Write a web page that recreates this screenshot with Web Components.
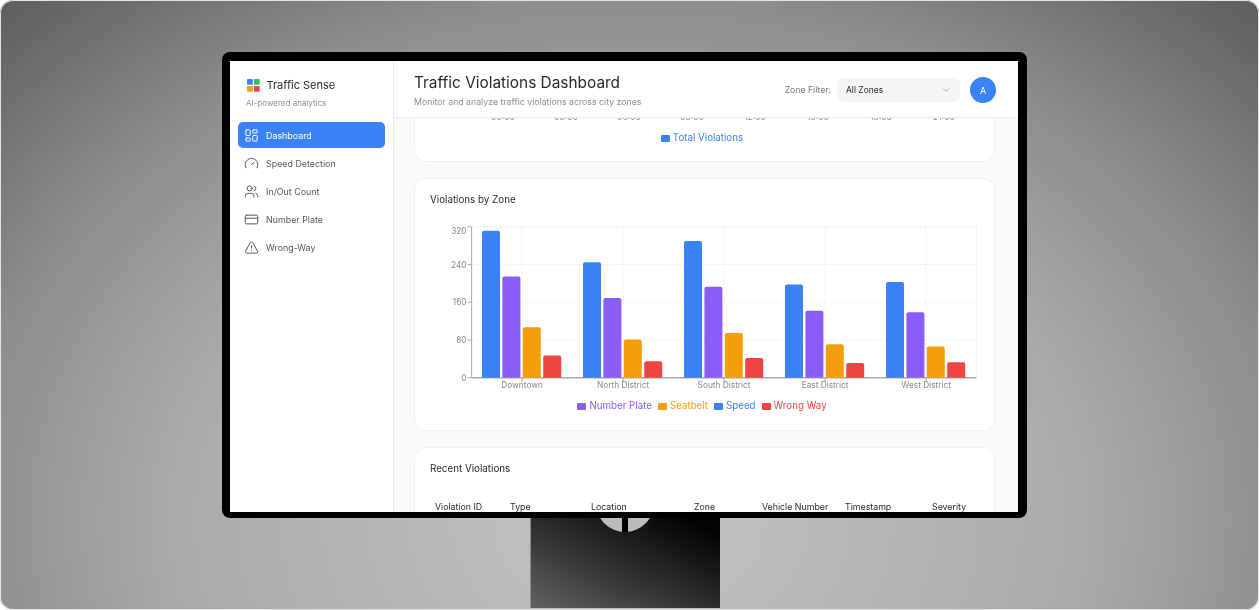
<!DOCTYPE html>
<html lang="en">
<head>
<meta charset="utf-8">
<title>Traffic Sense</title>
<style>
  html, body { margin: 0; background: #fff; font-family: Inter, "Liberation Sans", sans-serif; }
</style>
</head>
<body>
<dash-scene>
  <side-bar slot="side">
    <nav-item icon="dashboard" active>Dashboard</nav-item>
    <nav-item icon="gauge">Speed Detection</nav-item>
    <nav-item icon="users">In/Out Count</nav-item>
    <nav-item icon="card">Number Plate</nav-item>
    <nav-item icon="alert">Wrong-Way</nav-item>
  </side-bar>
  <top-bar slot="top"></top-bar>
  <trend-stub></trend-stub>
  <zone-chart></zone-chart>
  <recent-table></recent-table>
</dash-scene>

<script>
const ICONS = {
  dashboard: '<rect x="3" y="3" width="7" height="9" rx="1"/><rect x="14" y="3" width="7" height="5" rx="1"/><rect x="14" y="12" width="7" height="9" rx="1"/><rect x="3" y="16" width="7" height="5" rx="1"/>',
  gauge: '<path d="m12 14 4-4"/><path d="M3.34 19a10 10 0 1 1 17.32 0"/>',
  users: '<path d="M16 21v-2a4 4 0 0 0-4-4H6a4 4 0 0 0-4 4v2"/><circle cx="9" cy="7" r="4"/><path d="M22 21v-2a4 4 0 0 0-3-3.87"/><path d="M16 3.13a4 4 0 0 1 0 7.75"/>',
  card: '<rect x="2" y="5" width="20" height="14" rx="2"/><path d="M2 10h20"/>',
  alert: '<path d="m21.73 18-8-14a2 2 0 0 0-3.48 0l-8 14A2 2 0 0 0 4 21h16a2 2 0 0 0 1.73-3"/><path d="M12 9v4"/><path d="M12 17h.01"/>',
};

class DashScene extends HTMLElement {
  constructor() {
    super();
    this.attachShadow({ mode: "open" });
    this.shadowRoot.innerHTML = `
      <style>
        :host {
          display: block;
          width: 1259px;
          height: 610px;
          box-sizing: border-box;
          padding: 52px 0 0 222px;
          overflow: hidden;
          border-radius: 13px;
          background: radial-gradient(ellipse 900px 700px at 50% 85%, #c4c4c4 0%, #ababab 50%, #8c8c8c 75%, #606060 100%);
          box-shadow: inset 0 0 0 1px #e4e4e4;
        }
        .monitor {
          width: 805px;
          height: 466px;
          box-sizing: border-box;
          padding: 9px 9px 6px 8px;
          background: #000;
          border-radius: 8px;
        }
        .screen {
          display: flex;
          height: 100%;
          background: #fafafa;
          overflow: hidden;
          filter: blur(0.3px);
        }
        .right { flex: 1; min-width: 0; display: flex; flex-direction: column; }
        .main {
          flex: 1;
          min-height: 0;
          overflow: hidden;
          display: flex;
          flex-direction: column;
          gap: 16px;
          padding: 0 23px 0 20px;
        }
        .stand {
          position: relative;
          width: 190px;
          height: 90px;
          margin-left: 308px;
          overflow: hidden;
          background: linear-gradient(205deg, #040404 10%, #262626 45%, #626262 100%);
          box-shadow: inset 1px 0 0 #8a8a8a;
        }
        .hub {
          position: absolute;
          left: 65.7px;
          top: -44.6px;
          width: 58.6px;
          height: 58.6px;
          border-radius: 50%;
          background: linear-gradient(90deg, #bcbcbc 0 26.3px, #000 26.3px 32.3px, #bcbcbc 32.3px);
        }
      </style>
      <div class="monitor">
        <div class="screen">
          <slot name="side"></slot>
          <div class="right">
            <slot name="top"></slot>
            <div class="main"><slot></slot></div>
          </div>
        </div>
      </div>
      <div class="stand"><div class="hub"></div></div>
    `;
  }
}

class SideBar extends HTMLElement {
  constructor() {
    super();
    this.attachShadow({ mode: "open" });
    this.shadowRoot.innerHTML = `
      <style>
        :host {
          display: block;
          flex: none;
          width: 164px;
          box-sizing: border-box;
          background: #fff;
          border-right: 1px solid #ececec;
          padding: 17px 8px 0 7.5px;
        }
        .brand { display: flex; align-items: center; gap: 7px; padding-left: 9px; height: 15px; }
        .brand svg { display: block; }
        .name { font-size: 11px; color: #2a2a2c; line-height: 15px; }
        .sub { font-size: 8px; color: #8e8e92; line-height: 12px; margin: 4px 0 13px 8.5px; }
        nav { display: flex; flex-direction: column; gap: 2px; }
      </style>
      <div class="brand">
        <svg width="13" height="13" viewBox="0 0 13 13">
          <rect x="0" y="0" width="5.8" height="5.8" rx="1" fill="#3b82f6"/>
          <rect x="6.9" y="0" width="5.8" height="5.8" rx="1" fill="#22c55e"/>
          <rect x="0" y="6.9" width="5.8" height="5.8" rx="1" fill="#f59e0b"/>
          <rect x="6.9" y="6.9" width="5.8" height="5.8" rx="1" fill="#ef4444"/>
        </svg>
        <span class="name">Traffic Sense</span>
      </div>
      <div class="sub">AI-powered analytics</div>
      <nav><slot></slot></nav>
    `;
  }
}

class NavItem extends HTMLElement {
  constructor() {
    super();
    this.attachShadow({ mode: "open" });
    const icon = ICONS[this.getAttribute("icon")] || "";
    this.shadowRoot.innerHTML = `
      <style>
        :host {
          display: flex;
          align-items: center;
          gap: 7px;
          height: 26px;
          padding-left: 6.5px;
          border-radius: 5px;
          font-size: 8.9px;
          color: #58585c;
        }
        :host([active]) { background: #3b82f6; color: #fff; }
        svg { display: block; flex: none; }
      </style>
      <svg width="15" height="15" viewBox="0 0 24 24" fill="none" stroke="currentColor" stroke-width="1.6" stroke-linecap="round" stroke-linejoin="round">${icon}</svg>
      <span><slot></slot></span>
    `;
  }
}

class TopBar extends HTMLElement {
  constructor() {
    super();
    this.attachShadow({ mode: "open" });
    this.shadowRoot.innerHTML = `
      <style>
        :host {
          display: flex;
          flex: none;
          position: relative;
          z-index: 1;
          align-items: center;
          justify-content: space-between;
          height: 57px;
          box-sizing: border-box;
          padding: 2px 22px 0 20px;
          background: #fff;
          border-bottom: 1px solid #ececec;
        }
        h1 { margin: 0; font-size: 15.4px; font-weight: 400; line-height: 20px; color: #2a2a2c; }
        p { margin: 3px 0 0; font-size: 8.75px; line-height: 12px; color: #8e8e92; }
        .tools { display: flex; align-items: center; }
        label { font-size: 8.7px; color: #77777b; margin-right: 6px; }
        .select {
          display: flex;
          align-items: center;
          justify-content: space-between;
          width: 123px;
          height: 24px;
          box-sizing: border-box;
          padding: 0 9px;
          border-radius: 6px;
          background: #f5f5f7;
          font-size: 8.5px;
          color: #2a2a2c;
          margin-right: 10px;
        }
        .avatar {
          display: flex;
          align-items: center;
          justify-content: center;
          width: 26px;
          height: 26px;
          border-radius: 50%;
          background: #3b82f6;
          color: #fff;
          font-size: 9px;
        }
        svg { display: block; }
      </style>
      <div>
        <h1>Traffic Violations Dashboard</h1>
        <p>Monitor and analyze traffic violations across city zones</p>
      </div>
      <div class="tools">
        <label>Zone Filter:</label>
        <div class="select">
          <span>All Zones</span>
          <svg width="10" height="10" viewBox="0 0 24 24" fill="none" stroke="#a0a0a5" stroke-width="2" stroke-linecap="round" stroke-linejoin="round"><path d="m6 9 6 6 6-6"/></svg>
        </div>
        <div class="avatar">A</div>
      </div>
    `;
  }
}

const CARD_CSS = `
  :host {
    display: block;
    flex: none;
    box-sizing: border-box;
    background: #fff;
    border: 1px solid #f0f0f0;
    border-radius: 12px;
    padding: 0 15px;
  }
  h2 { margin: 0; font-size: 9.8px; font-weight: 400; line-height: 14px; color: #2a2a2c; }
  .legend {
    display: flex;
    justify-content: center;
    gap: 6px;
    font-size: 9.75px;
    line-height: 14px;
    padding-right: 5px;
  }
  .legend span { display: flex; align-items: center; gap: 3px; }
  .legend i { display: block; width: 9px; height: 7px; border-radius: 1px; background: currentColor; }
`;

class TrendStub extends HTMLElement {
  constructor() {
    super();
    this.attachShadow({ mode: "open" });
    const hours = ["00:00", "03:00", "06:00", "09:00", "12:00", "15:00", "18:00", "21:00"];
    this.shadowRoot.innerHTML = `
      <style>
        ${CARD_CSS}
        :host { height: 85px; margin-top: -41px; padding-top: 34px; }
        .ticks { display: flex; padding-left: 41.5px; font-size: 8.5px; line-height: 11px; color: #888; }
        .ticks span { width: 63px; text-align: center; }
        .legend { margin-top: 8px; }
      </style>
      <div class="ticks">${hours.map((h) => `<span>${h}</span>`).join("")}</div>
      <div class="legend"><span style="color:#3b82f6"><i></i>Total Violations</span></div>
    `;
  }
}

class ZoneChart extends HTMLElement {
  constructor() {
    super();
    this.attachShadow({ mode: "open" });
    // tops are read off the axis: y = 161.7 at 0, 37.7px for every 80
    const zones = [
      ["Downtown", 312, 215, 107, 47],
      ["North District", 245, 169, 81, 35],
      ["South District", 290, 193, 95, 42],
      ["East District", 198, 142, 71, 31],
      ["West District", 203, 139, 66, 33],
    ];
    const colors = ["#3b82f6", "#8b5cf6", "#f59e0b", "#ef4444"];
    const base = 161.7;
    const left = 41.6;
    const band = 101;
    let grid = "";
    let bars = "";
    let labels = "";
    [0, 80, 160, 240, 320].forEach((v) => {
      const y = base - (v / 80) * 37.7;
      if (v) grid += `<line x1="${left}" x2="${left + band * 5}" y1="${y}" y2="${y}" stroke="#ececec" stroke-dasharray="2 2"/>`;
      grid += `<line x1="${left - 4}" x2="${left}" y1="${y}" y2="${y}" stroke="#aaa"/>`;
      labels += `<text x="${left - 5}" y="${(v === 320 ? y + 4 : y) + 3}" text-anchor="end">${v}</text>`;
    });
    zones.forEach(([name, ...vals], i) => {
      const cx = left + band * (i + 0.5);
      grid += `<line x1="${cx}" x2="${cx}" y1="${base - 150.8}" y2="${base}" stroke="#ececec" stroke-dasharray="2 2"/>`;
      grid += `<line x1="${cx}" x2="${cx}" y1="${base}" y2="${base + 4}" stroke="#aaa"/>`;
      labels += `<text x="${cx}" y="${base + 10.5}" text-anchor="middle">${name}</text>`;
      vals.forEach((v, j) => {
        const h = (v / 80) * 37.7;
        const x = left + band * i + 10.4 + j * 20.4;
        bars += `<path d="M${x} ${base}v${-(h - 2)}a2 2 0 0 1 2-2h14a2 2 0 0 1 2 2v${h - 2}z" fill="${colors[j]}"/>`;
      });
    });
    grid += `<line x1="${left}" x2="${left}" y1="${base - 150.8}" y2="${base}" stroke="#aaa"/>`;
    grid += `<line x1="${left}" x2="${left + band * 5}" y1="${base}" y2="${base}" stroke="#aaa" stroke-width="1.4"/>`;
    grid += `<line x1="${left + band * 5}" x2="${left + band * 5}" y1="${base - 150.8}" y2="${base}" stroke="#ececec" stroke-dasharray="2 2"/>`;
    grid += `<line x1="${left}" x2="${left + band * 5}" y1="${base - 150.8}" y2="${base - 150.8}" stroke="#ececec" stroke-dasharray="2 2"/>`;
    this.shadowRoot.innerHTML = `
      <style>
        ${CARD_CSS}
        :host { height: 253px; padding-top: 14px; }
        svg { display: block; margin-top: 9px; }
        text { font-family: Inter, "Liberation Sans", sans-serif; font-size: 8.3px; fill: #888; }
        .legend { margin-top: 7px; }
      </style>
      <h2>Violations by Zone</h2>
      <svg width="549" height="176" viewBox="0 0 549 176">${grid}${bars}${labels}</svg>
      <div class="legend">
        <span style="color:#8b5cf6"><i></i>Number Plate</span>
        <span style="color:#f59e0b"><i></i>Seatbelt</span>
        <span style="color:#3b82f6"><i></i>Speed</span>
        <span style="color:#ef4444"><i></i>Wrong Way</span>
      </div>
    `;
  }
}

class RecentTable extends HTMLElement {
  constructor() {
    super();
    this.attachShadow({ mode: "open" });
    const cols = ["Violation ID", "Type", "Location", "Zone", "Vehicle Number", "Timestamp", "Severity"];
    this.shadowRoot.innerHTML = `
      <style>
        ${CARD_CSS}
        :host { height: 120px; padding-top: 14px; }
        .head {
          display: grid;
          grid-template-columns: 75px 81px 103px 68px 83px 87px 1fr;
          padding-left: 5px;
          margin-top: 25px;
          font-size: 8.8px;
          line-height: 12px;
          color: #2a2a2c;
          white-space: nowrap;
        }
      </style>
      <h2>Recent Violations</h2>
      <div class="head">${cols.map((c) => `<span>${c}</span>`).join("")}</div>
    `;
  }
}

customElements.define("dash-scene", DashScene);
customElements.define("side-bar", SideBar);
customElements.define("nav-item", NavItem);
customElements.define("top-bar", TopBar);
customElements.define("trend-stub", TrendStub);
customElements.define("zone-chart", ZoneChart);
customElements.define("recent-table", RecentTable);
</script>
</body>
</html>
